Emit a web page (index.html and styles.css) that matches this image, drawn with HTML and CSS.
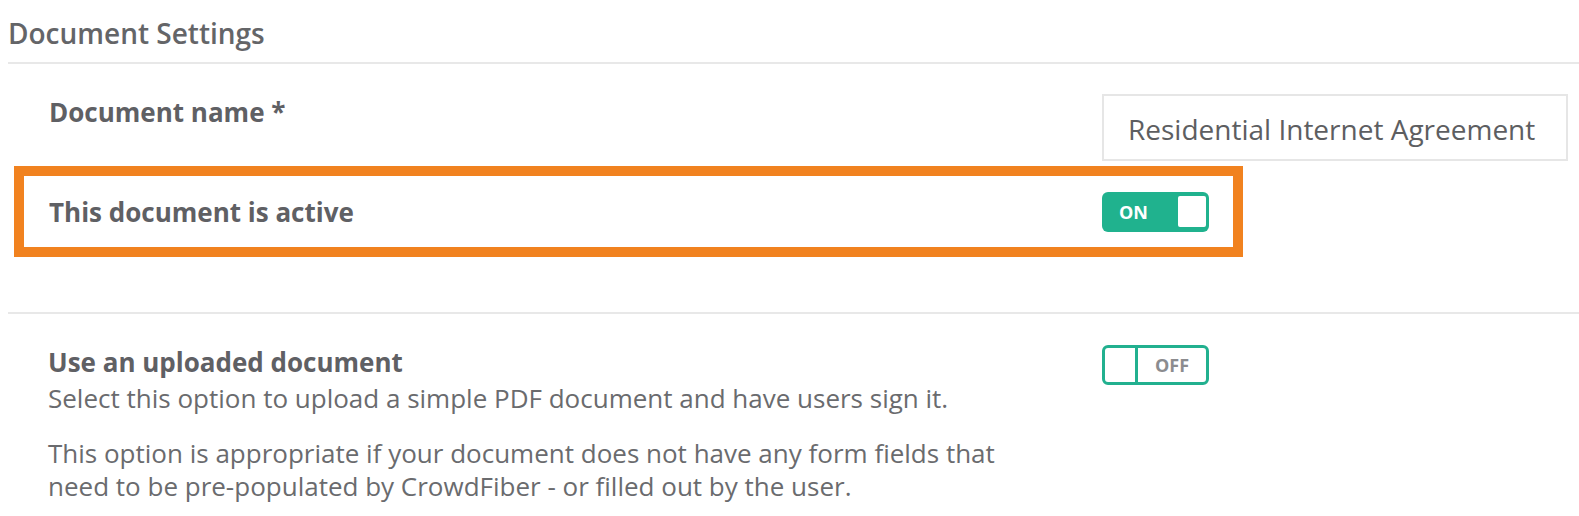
FILE: index.html
```html
<!DOCTYPE html>
<html>
<head>
<meta charset="utf-8">
<link rel="stylesheet" href="styles.css">
</head>
<body>
<div class="page">
  <h2 class="section-title">Document Settings</h2>
  <div class="row row-name">
    <div class="label">Document name *</div>
    <div class="control">
      <div class="input">Residential Internet Agreement</div>
    </div>
  </div>
  <div class="row row-active">
    <div class="label">This document is active</div>
    <div class="control">
      <div class="toggle on"><span class="toggle-text">ON</span><span class="knob"></span></div>
    </div>
  </div>
  <div class="divider"></div>
  <div class="row row-upload">
    <div class="label-block">
      <div class="label">Use an uploaded document</div>
      <p class="desc">Select this option to upload a simple PDF document and have users sign it.</p>
      <p class="desc desc-2">This option is appropriate if your document does not have any form fields that<br>need to be pre-populated by CrowdFiber - or filled out by the user.</p>
    </div>
    <div class="control">
      <div class="toggle off"><span class="knob"></span><span class="toggle-text">OFF</span></div>
    </div>
  </div>
</div>
</body>
</html>
```

FILE: styles.css
```css
html, body {
  margin: 0;
  padding: 0;
  background: #ffffff;
}
body {
  font-family: "Open Sans", "Liberation Sans", sans-serif;
  color: #666769;
}
.page {
  padding-left: 8px;
  width: 1571px;
}
.section-title {
  margin: 0;
  padding-top: 14px;
  font-size: 28px;
  line-height: 38px;
  font-weight: 600;
  color: #646568;
  border-bottom: 2px solid #e8e8e8;
  box-sizing: border-box;
  height: 64px;
}
.row {
  display: flex;
  align-items: flex-start;
}
.label {
  font-size: 26px;
  font-weight: 700;
  color: #5f6064;
  line-height: 32px;
}
.control {
  margin-left: auto;
}
.row-name {
  padding-top: 30px;
  padding-left: 41px;
  padding-right: 11px;
}
.row-name .label {
  padding-top: 2px;
}
.input {
  width: 466px;
  height: 67px;
  box-sizing: border-box;
  border: 2px solid #e6e6e6;
  font-size: 28px;
  line-height: 63px;
  padding-top: 2px;
  padding-left: 24px;
  color: #5d5e61;
  overflow: hidden;
}
.row-active {
  margin-top: 5px;
  margin-left: 6px;
  width: 1229px;
  height: 91px;
  box-sizing: border-box;
  border: 10px solid #f1821f;
  padding-left: 25px;
  align-items: center;
}
.row-active .control {
  margin-left: 0;
}
.row-active .label {
  flex: 0 0 1053px;
}
.toggle {
  width: 107px;
  height: 40px;
  box-sizing: border-box;
  border-radius: 6px;
  display: flex;
  align-items: center;
  font-size: 18px;
  font-weight: 700;
}
.toggle.on {
  background: #20b28e;
  color: #ffffff;
  padding: 0 3px 0 17px;
}
.toggle.on .toggle-text {
  flex: 1;
}
.toggle.on .knob {
  width: 28px;
  height: 31px;
  background: #ffffff;
  border-radius: 2px;
}
.toggle.off {
  border: 3px solid #22b08f;
  background: #ffffff;
  color: #8b8c8f;
}
.toggle.off .knob {
  width: 30px;
  height: 100%;
  border-right: 3px solid #22b08f;
}
.toggle.off .toggle-text {
  flex: 1;
  text-align: center;
}
.divider {
  margin-top: 55px;
  height: 2px;
  background: #e8e8e8;
}
.row-upload {
  padding-top: 32px;
  padding-left: 40px;
  padding-right: 370px;
}
.row-upload .control {
  margin-top: -1px;
}
.desc {
  margin: 0;
  margin-top: 4px;
  font-size: 26px;
  line-height: 33px;
  color: #6a6b6e;
}
.desc-2 {
  margin-top: 22px;
}
```
